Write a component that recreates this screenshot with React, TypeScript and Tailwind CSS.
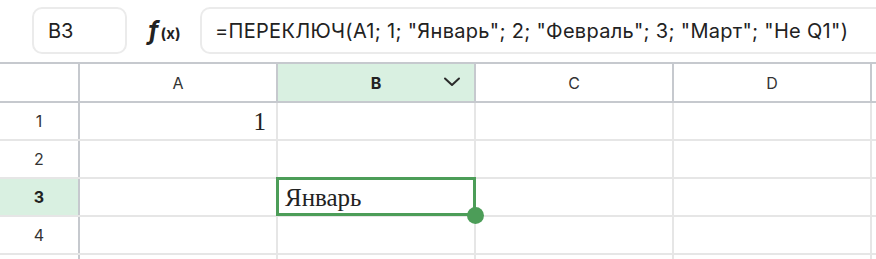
import React from 'react';

const COLS = ['A', 'B', 'C', 'D'];
const ROWS = [1, 2, 3, 4, 5];

const cellValue = (col: string, row: number) => {
    if (col === 'A' && row === 1) return { text: '1', align: 'right' };
    if (col === 'B' && row === 3) return { text: 'Январь', align: 'left' };
    return null;
};

const Chevron = () => (
    <svg width="18" height="10" viewBox="0 0 18 10" fill="none">
        <path d="M2 1.5L9 8L16 1.5" stroke="#2b2b2b" strokeWidth="2" strokeLinecap="round" strokeLinejoin="round" />
    </svg>
);

export default function App() {
    return (
        <div className="relative w-[876px] h-[259px] overflow-hidden bg-white text-[#222]" style={{ fontFamily: 'Inter, "Noto Sans", sans-serif' }}>
            {/* Toolbar */}
            <div className="h-[62px] flex items-start pt-[7px] pl-[32px]">
                <div className="w-[95px] h-[47px] shrink-0 rounded-[10px] border-2 border-[#ebebeb] flex items-center pl-[14px] text-[20px]">
                    B3
                </div>
                <div className="w-[73px] h-[47px] shrink-0 flex items-center justify-center pl-[2px]">
                    <span className="flex items-baseline">
                        <span className="font-bold italic text-[25px] leading-none">f</span>
                        <span className="font-bold text-[15px] leading-none ml-[2px]">(x)</span>
                    </span>
                </div>
                <div className="h-[47px] flex-1 min-w-[700px] rounded-l-[10px] border-2 border-r-0 border-[#ebebeb] flex items-center pl-[13px] text-[20px] tracking-[0.3px] whitespace-nowrap">
                    =ПЕРЕКЛЮЧ(A1; 1; "Январь"; 2; "Февраль"; 3; "Март"; "Не Q1")
                </div>
            </div>

            {/* Grid */}
            <div className="border-t-2 border-[#c6c9ce]">
                <div className="flex h-[39px] border-b-2 border-[#c6c9ce]">
                    <div className="w-[80px] shrink-0 border-r-2 border-[#c6c9ce]" />
                    {COLS.map((c) => (
                        <div
                            key={c}
                            className={`w-[198px] shrink-0 border-r-2 border-[#c6c9ce] relative flex items-center justify-center text-[16px] ${c === 'B' ? 'bg-[#d9f0e1] font-bold' : 'text-[#333]'}`}
                        >
                            {c}
                            {c === 'B' && (
                                <span className="absolute right-[13px] top-[13px]">
                                    <Chevron />
                                </span>
                            )}
                        </div>
                    ))}
                    <div className="flex-1 bg-white" />
                </div>
                {ROWS.map((r) => (
                    <div key={r} className="flex h-[38px] border-b-2 border-[#e6e6e6]">
                        <div
                            className={`w-[80px] shrink-0 border-r-2 border-[#c6c9ce] flex items-center justify-center text-[16px] ${r === 3 ? 'bg-[#d9f0e1] font-bold' : 'text-[#333]'}`}
                        >
                            {r < 5 ? r : ''}
                        </div>
                        {COLS.map((c) => {
                            const v = cellValue(c, r);
                            return (
                                <div
                                    key={c}
                                    className={`w-[198px] shrink-0 border-r-2 border-[#e6e6e6] flex items-center pl-[7px] pr-[10px] pt-[2px] text-[25px] ${v?.align === 'right' ? 'justify-end' : 'justify-start'}`}
                                    style={{ fontFamily: '"Liberation Serif", "Times New Roman", serif' }}
                                >
                                    {v?.text}
                                </div>
                            );
                        })}
                    </div>
                ))}
            </div>

            {/* Selection B3 */}
            <div className="absolute left-[276px] top-[177px] w-[200px] h-[39px] border-[3px] border-[#4c9d58] pointer-events-none" />
            <div className="absolute left-[467px] top-[207px] w-[17px] h-[17px] rounded-full bg-[#4c9d58]" />
        </div>
    );
}
